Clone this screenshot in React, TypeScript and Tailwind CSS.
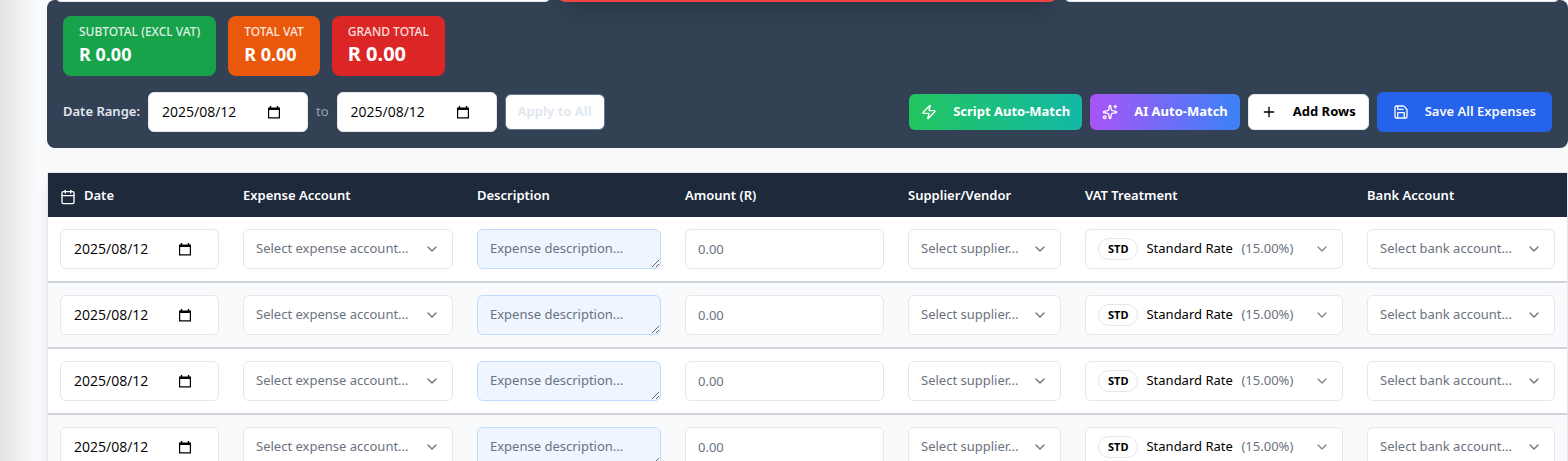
import { useState } from "react";
import type { ReactNode } from "react";
import { Calendar, ChevronDown, Plus, Save, Sparkles, Zap } from "lucide-react";

const ROWS = [1, 2, 3, 4];

function CalendarGlyph() {
  return (
    <svg viewBox="0 0 12 13" className="h-[13px] w-3" fill="none" aria-hidden="true">
      <path d="M0 1.4h12v11H0z M1.2 4v7.2h9.6V4z" fill="#000" fillRule="evenodd" />
      <path d="M1.8 0h1.4v2H1.8z M8.8 0h1.4v2H8.8z" fill="#000" />
    </svg>
  );
}

function DateField({ label, className }: { label: string; className: string }) {
  const [value, setValue] = useState("2025/08/12");
  return (
    <div className={`flex h-10 items-center rounded-md border border-[#e5e7eb] bg-white pr-[27px] pl-[13px] ${className}`}>
      <input
        type="text"
        aria-label={label}
        value={value}
        onChange={(e) => setValue(e.target.value)}
        className="min-w-0 flex-1 bg-transparent font-['Open_Sans',sans-serif] text-[14px] leading-5 text-black outline-none"
      />
      <button type="button" aria-label={`Pick ${label}`}>
        <CalendarGlyph />
      </button>
    </div>
  );
}

function SelectField({ label, placeholder }: { label: string; placeholder: string }) {
  return (
    <div className="relative">
      <select
        aria-label={label}
        className="block h-10 w-full appearance-none rounded-md border border-[#e5e7eb] bg-white pr-8 pl-3 text-[13px] text-[#6b7280] outline-none"
      >
        <option>{placeholder}</option>
      </select>
      <ChevronDown className="pointer-events-none absolute top-3 right-[13px] size-4 text-[#6b7280]" />
    </div>
  );
}

function VatField({ label }: { label: string }) {
  return (
    <div className="flex h-10 items-center gap-2 rounded-md border border-[#e5e7eb] bg-white px-3 text-[13px]">
      <span className="rounded-full border border-[#e5e7eb] px-[9px] py-[2px] text-[11px] leading-4 font-bold text-black">
        STD
      </span>
      <select aria-label={label} className="appearance-none bg-transparent text-black outline-none">
        <option>Standard Rate</option>
      </select>
      <span className="text-[#6b7280]">(15.00%)</span>
      <ChevronDown className="ml-auto size-4 text-[#868686]" />
    </div>
  );
}

function Total({ label, value, className, size }: { label: string; value: string; className: string; size: string }) {
  return (
    <div className={`rounded-lg px-4 py-2 text-white ${className}`}>
      <div className="text-[12px] leading-4 font-medium opacity-85">{label}</div>
      <div className={`leading-7 font-bold ${size}`}>{value}</div>
    </div>
  );
}

function Action({ icon, children, className }: { icon: ReactNode; children: ReactNode; className: string }) {
  return (
    <button type="button" className={`flex items-center gap-4 rounded-md text-[13px] ${className}`}>
      {icon}
      {children}
    </button>
  );
}

function Th({ children }: { children: ReactNode }) {
  return <th className="h-11 px-3 text-left align-middle leading-5 font-semibold text-white">{children}</th>;
}

export default function App() {
  return (
    <div className="flex h-screen overflow-hidden bg-[#f9fafb] font-['Noto_Sans','Open_Sans',sans-serif] text-[13px]">
      <div className="w-[47px] shrink-0 bg-linear-to-r from-[#e3e4e5] to-[#f9fafb] to-80%" />
      <main className="min-w-0 flex-1">
        <section className="rounded-lg bg-[#334155] pb-4">
          <div className="grid grid-cols-3 grid-rows-[2px] items-end gap-2 px-2">
            <div className="h-10 rounded-b-md border border-[#e2e8f0] bg-white" />
            <div className="h-10 rounded-b-md bg-[#ef4444] shadow-xl" />
            <div className="h-10 rounded-b-md border border-[#e2e8f0] bg-white" />
          </div>
          <div className="flex flex-wrap gap-3 px-4 pt-[14px]">
            <Total label="SUBTOTAL (EXCL VAT)" value="R 0.00" size="text-[18px]" className="bg-[#16a34a]" />
            <Total label="TOTAL VAT" value="R 0.00" size="text-[18px]" className="bg-[#ea580c]" />
            <Total label="GRAND TOTAL" value="R 0.00" size="text-[20px]" className="bg-[#dc2626]" />
          </div>
          <div className="mt-4 flex flex-wrap items-center justify-between gap-2 px-4">
            <div className="flex items-center gap-2">
              <span className="font-semibold text-[#e2e8f0]">Date Range:</span>
              <DateField label="Start date" className="w-40" />
              <span className="text-[#94a3b8]">to</span>
              <DateField label="End date" className="w-40" />
              <button type="button" className="h-9 rounded-md border border-[#64748b] bg-white px-3 font-bold text-[#e2e8f0]">
                Apply to All
              </button>
            </div>
            <div className="flex items-center gap-2">
              <Action icon={<Zap className="size-4" />} className="h-9 bg-linear-to-r/srgb from-[#22c55e] to-[#14b8a6] px-3 font-bold text-white">
                Script Auto-Match
              </Action>
              <Action icon={<Sparkles className="size-4" />} className="h-9 bg-linear-to-r/srgb from-[#a855f7] to-[#3b82f6] px-3 font-bold text-white">
                AI Auto-Match
              </Action>
              <Action icon={<Plus className="size-4" />} className="h-9 border border-[#e5e7eb] bg-white px-3 font-bold text-black">
                Add Rows
              </Action>
              <Action icon={<Save className="size-4" />} className="h-10 bg-[#2563eb] px-4 font-semibold text-[#f8fafc]">
                Save All Expenses
              </Action>
            </div>
          </div>
        </section>

        <section className="mt-6 border border-[#e5e7eb] bg-white shadow-lg">
          <table className="w-full table-fixed border-collapse">
            <colgroup>
              <col className="w-[183px]" />
              <col className="w-[234px]" />
              <col className="w-[208px]" />
              <col className="w-[223px]" />
              <col className="w-[177px]" />
              <col className="w-[282px]" />
              <col className="w-[212px]" />
            </colgroup>
            <thead className="bg-[#1e293b]">
              <tr>
                <Th>
                  <span className="flex items-end gap-2">
                    <Calendar className="size-4" />
                    Date
                  </span>
                </Th>
                <Th>Expense Account</Th>
                <Th>Description</Th>
                <Th>Amount (R)</Th>
                <Th>Supplier/Vendor</Th>
                <Th>VAT Treatment</Th>
                <Th>Bank Account</Th>
              </tr>
            </thead>
            <tbody>
              {ROWS.map((n) => (
                <tr key={n} className="border-b-2 border-[#d1d5db] bg-white even:bg-[#f9fafb]">
                  <td className="p-3">
                    <DateField label={`Date, row ${n}`} className="w-full" />
                  </td>
                  <td className="p-3">
                    <SelectField label={`Expense account, row ${n}`} placeholder="Select expense account..." />
                  </td>
                  <td className="p-3">
                    <textarea
                      aria-label={`Description, row ${n}`}
                      placeholder="Expense description..."
                      className="block h-10 w-full resize rounded-md border border-[#bfdbfe] bg-[#eff6ff] px-3 py-2 leading-5 outline-none placeholder:text-[#6b7280]"
                    />
                  </td>
                  <td className="p-3">
                    <input
                      type="text"
                      aria-label={`Amount, row ${n}`}
                      placeholder="0.00"
                      className="block h-10 w-full rounded-md border border-[#e5e7eb] bg-white px-3 outline-none placeholder:text-[#6b7280]"
                    />
                  </td>
                  <td className="p-3">
                    <SelectField label={`Supplier, row ${n}`} placeholder="Select supplier..." />
                  </td>
                  <td className="p-3">
                    <VatField label={`VAT treatment, row ${n}`} />
                  </td>
                  <td className="p-3">
                    <SelectField label={`Bank account, row ${n}`} placeholder="Select bank account..." />
                  </td>
                </tr>
              ))}
            </tbody>
          </table>
        </section>
      </main>
    </div>
  );
}
